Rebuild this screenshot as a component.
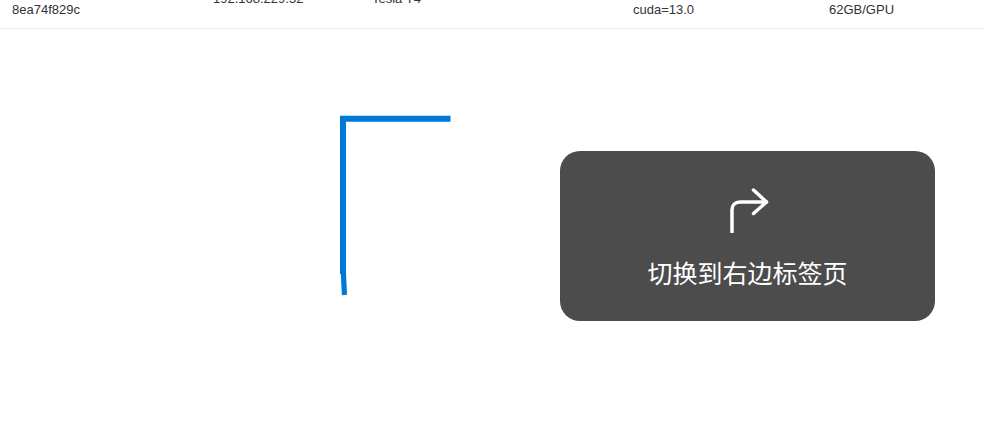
<style>
:global(body) { margin: 0; background: #fff; font-family: "Liberation Sans", Arial, sans-serif; }
.page { position: relative; width: 984px; height: 433px; overflow: hidden; }
.row { display: grid; grid-template-columns: 201px 159px 261px 196px 1fr; height: 28px; padding-left: 12px; border-bottom: 1px solid #ebeef5; overflow: hidden; font-size: 13px; line-height: 18px; color: #333; }
.cell { white-space: nowrap; }
.low { margin-top: 1px; }
.high { margin-top: -10px; }
.sketch { position: absolute; left: 0; top: 0; pointer-events: none; }
.toast { position: absolute; left: 560px; top: 151px; width: 375px; height: 170px; border-radius: 20px; background: #4c4c4c; color: #fff; display: flex; flex-direction: column; align-items: center; }
.toast svg { margin-top: 34px; display: block; }
.label { margin-top: 21px; font-family: "Noto Sans CJK SC", sans-serif; font-size: 25px; line-height: 36px; }
</style>

<div class="page">
  <div class="row">
    <div class="cell low">8ea74f829c</div>
    <div class="cell high">192.168.229.52</div>
    <div class="cell high">Tesla T4</div>
    <div class="cell low">cuda=13.0</div>
    <div class="cell low">62GB/GPU</div>
  </div>
  <svg class="sketch" width="984" height="433" viewBox="0 0 984 433" fill="none">
    <path d="M450.500 118.800H343V274" stroke="#0078d7" stroke-width="6" stroke-linejoin="miter" />
    <path d="M343.300 272L344.500 295" stroke="#0078d7" stroke-width="5.200" />
  </svg>
  <div class="toast">
    <svg width="48" height="48" viewBox="0 0 48 48" fill="none" stroke="#fff" stroke-width="3.500" stroke-linecap="round" stroke-linejoin="round">
      <path d="M8 47V25C8 20 11 17 16 17H42.500" />
      <path d="M29.500 5L42.500 17L29.500 28.500" />
    </svg>
    <div class="label">切换到右边标签页</div>
  </div>
</div>
